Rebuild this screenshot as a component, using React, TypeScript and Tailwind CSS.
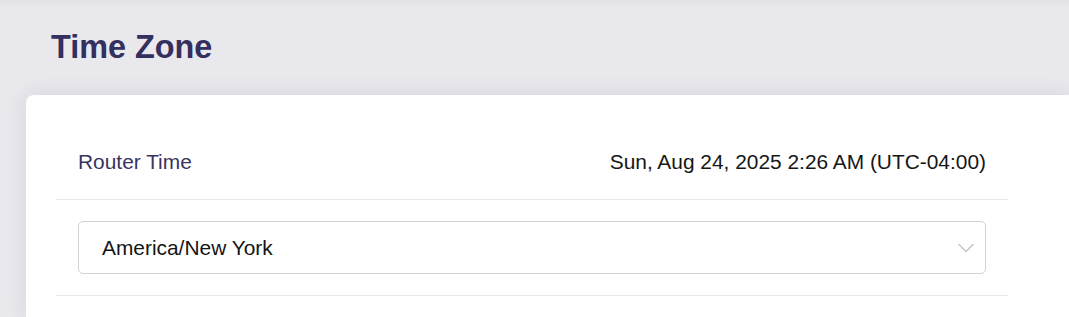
import React from "react";

export default function App() {
  return (
    <div
      className="h-[317px] w-[1069px] overflow-hidden bg-[#e9e8ed] shadow-[inset_0_6px_8px_-6px_rgba(0,0,0,0.06)]"
      style={{ fontFamily: '"Liberation Sans", Arial, sans-serif' }}
    >
      <div className="pl-[51px] pt-[27px] pb-[28px]">
        <h1 className="text-[32.4px] font-bold leading-[40px] text-[#332f5e]">Time Zone</h1>
      </div>
      <div className="ml-[26px] h-[222px] rounded-tl-[8px] bg-white pl-[30px] pt-[29px] shadow-[0_0_22px_rgba(40,36,70,0.10)]">
        <div className="w-[952px]">
          <div className="flex h-[76px] items-center justify-between border-b border-[#e9e9ec] px-[22px] pt-[1px]">
            <span className="text-[20.9px] text-[#38345f]">Router Time</span>
            <span className="text-[20.9px] text-[#161616]">Sun, Aug 24, 2025 2:26 AM (UTC-04:00)</span>
          </div>
          <div className="border-b border-[#e9e9ec] px-[22px] py-[21px]">
            <div className="flex h-[53px] items-center justify-between rounded-[5px] border border-[#d3d3d8] pl-[23px] pr-[11px]">
              <span className="text-[20.9px] text-[#141414]">America/New York</span>
              <svg width="16" height="10" viewBox="0 0 16 10" fill="none">
                <path d="M1 1.5 L8 8.5 L15 1.5" stroke="#c6c5cf" strokeWidth="1.6" strokeLinecap="round" strokeLinejoin="round" />
              </svg>
            </div>
          </div>
        </div>
      </div>
    </div>
  );
}
